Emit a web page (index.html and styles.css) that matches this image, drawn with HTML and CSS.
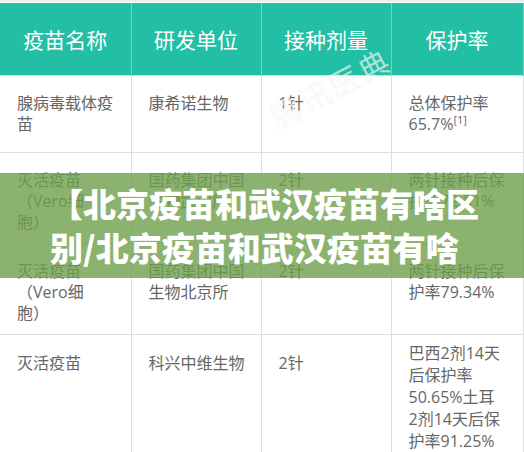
FILE: index.html
```html
<!DOCTYPE html>
<html lang="zh-CN">
<head>
<meta charset="utf-8">
<link rel="stylesheet" href="styles.css">
</head>
<body>
<div class="page">
  <table class="vtable">
    <colgroup>
      <col class="c1"><col class="c2"><col class="c3"><col class="c4">
    </colgroup>
    <thead>
      <tr class="head">
        <th>疫苗名称</th><th>研发单位</th><th>接种剂量</th><th>保护率</th>
      </tr>
    </thead>
    <tbody>
      <tr class="r1">
        <td>腺病毒载体疫苗</td><td>康希诺生物</td><td>1针</td><td>总体保护率65.7%<sup>[1]</sup></td>
      </tr>
      <tr class="r2">
        <td>灭活疫苗<br>（Vero细<br>胞）</td><td>国药集团中国生物武汉所</td><td>2针</td><td>两针接种后保护率72.51%</td>
      </tr>
      <tr class="r3">
        <td>灭活疫苗<br>（Vero细<br>胞）</td><td>国药集团中国生物北京所</td><td>2针</td><td>两针接种后保护率79.34%</td>
      </tr>
      <tr class="r4">
        <td>灭活疫苗</td><td>科兴中维生物</td><td>2针</td><td class="tight">巴西2剂14天<br>后保护率<br>50.65%土耳<br>2剂14天后保<br>护率91.25%</td>
      </tr>
    </tbody>
  </table>
  <div class="watermark">腾讯医典</div>
  <div class="banner">【北京疫苗和武汉疫苗有啥区别/北京疫苗和武汉疫苗有啥</div>
</div>
</body>
</html>
```

FILE: styles.css
```css
html, body {
  margin: 0;
  padding: 0;
  background: #ffffff;
}
body {
  width: 524px;
  height: 452px;
  overflow: hidden;
  font-family: "Open Sans", "Noto Sans CJK SC", sans-serif;
}
.page {
  position: relative;
  width: 524px;
  height: 452px;
  overflow: hidden;
  border-top: 2px solid #ececec;
  box-sizing: border-box;
}
.vtable {
  width: 523px;
  border-collapse: collapse;
  table-layout: fixed;
  margin-top: 1px;
}
.c1 { width: 131px; }
.c2 { width: 130px; }
.c3 { width: 130px; }
.c4 { width: 132px; }

.head th {
  background: #22bfa5;
  color: #ffffff;
  font-weight: 400;
  font-size: 21px;
  height: 72px;
  padding: 0;
  text-align: center;
  vertical-align: middle;
  border-left: 1px solid #6fd6c4;
  border-right: 1px solid #6fd6c4;
  font-family: "Noto Sans CJK SC", sans-serif;
}
.head th:first-child { border-left: none; }

.vtable td {
  border: 1px solid #dedede;
  color: #666666;
  font-size: 16px;
  line-height: 21px;
  padding: 17px 16px 8px 17px;
  vertical-align: top;
}
.vtable td:first-child { border-left: none; }
.vtable td:last-child { border-right: 1px solid #dedede; }

.r1 { height: 77px; }
.r2 { height: 91px; }
.r3 { height: 91px; }
.r4 td { padding-top: 18px; }
.r4 td.tight { padding-top: 7px; line-height: 22px; }

sup {
  font-size: 11px;
  line-height: 0;
  vertical-align: 6px;
}

.watermark {
  position: absolute;
  left: 272px;
  top: 94px;
  font-family: "Noto Sans CJK SC", sans-serif;
  font-size: 30px;
  letter-spacing: 3px;
  color: rgba(255, 255, 255, 0.6);
  text-shadow: 0 0 1px rgba(170, 170, 170, 0.18);
  transform: rotate(-28deg);
  transform-origin: left center;
  white-space: nowrap;
}

.banner {
  position: absolute;
  left: 0;
  top: 171px;
  width: 524px;
  height: 105px;
  box-sizing: border-box;
  padding: 8px 34px 0 50px;
  background: rgba(110, 160, 75, 0.8);
  color: #ffffff;
  font-family: "Noto Sans CJK SC", sans-serif;
  font-weight: 900;
  font-size: 33px;
  line-height: 44px;
  word-break: break-all;
}
```
